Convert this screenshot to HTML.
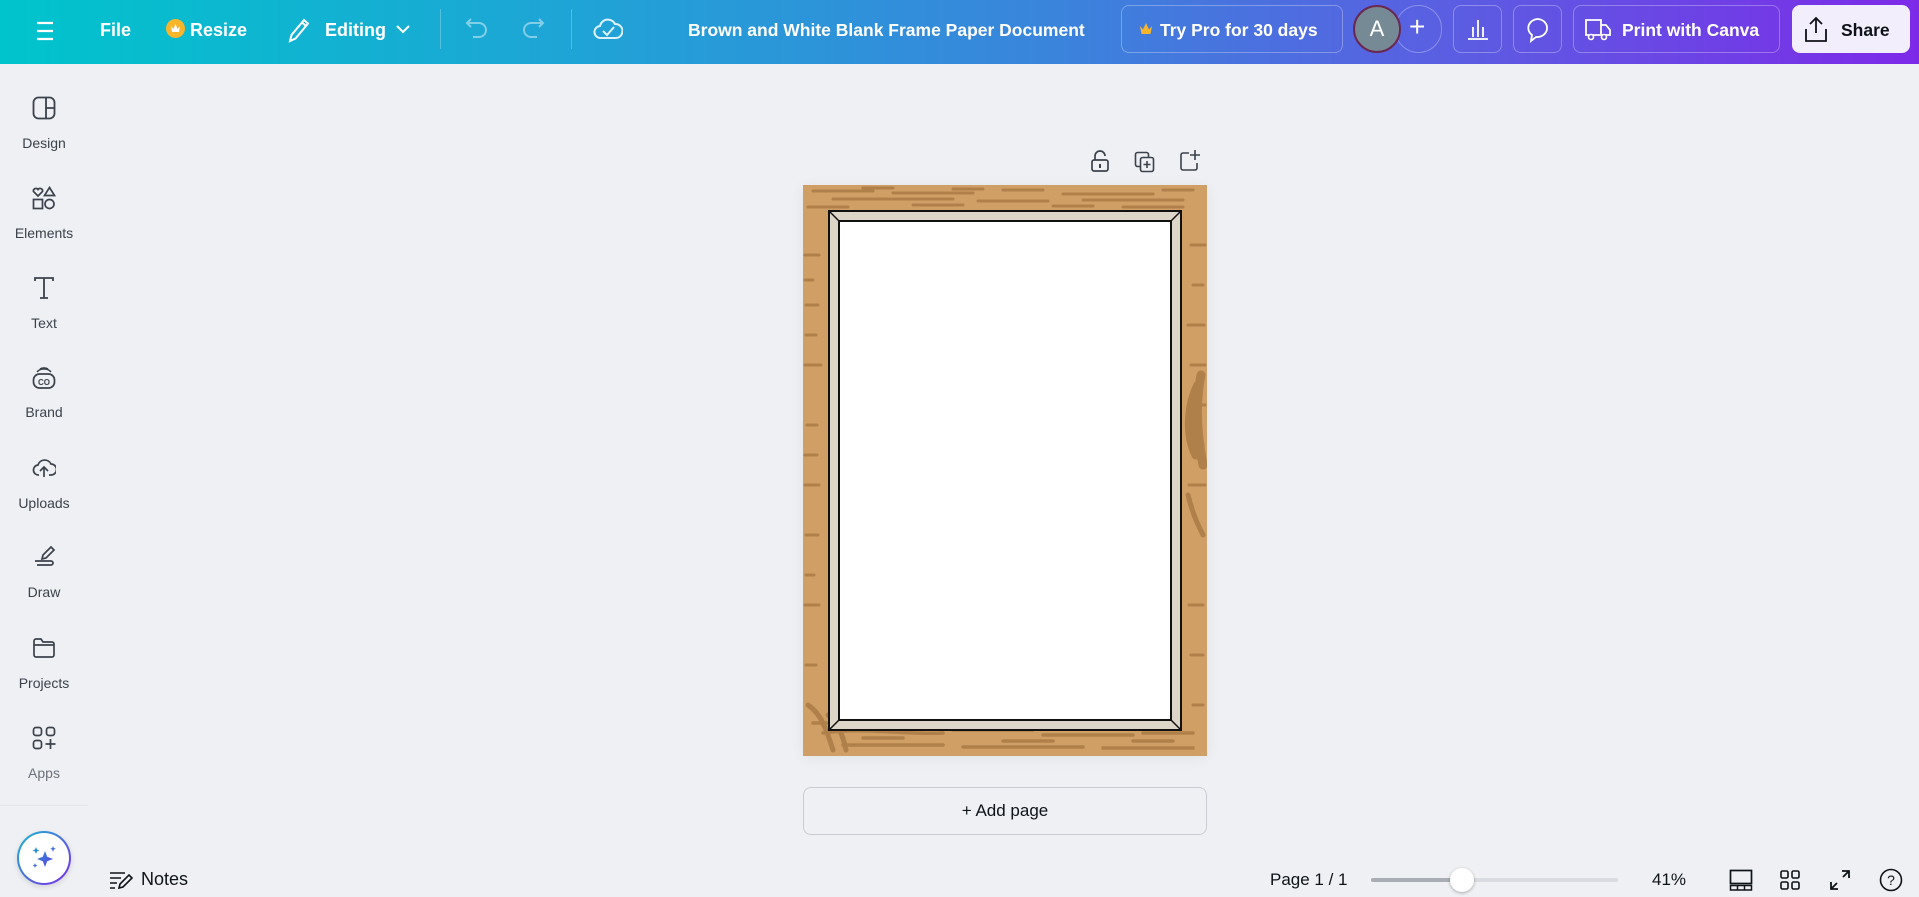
<!DOCTYPE html>
<html><head><meta charset="utf-8">
<style>
*{margin:0;padding:0;box-sizing:border-box}
body{width:1919px;height:897px;overflow:hidden;background:#eef0f4;font-family:"Liberation Sans",sans-serif;position:relative;color:#0e1318}
.top{position:absolute;left:0;top:0;width:1919px;height:64px;background:linear-gradient(90deg,#00c4cc 0%,#1fa4d6 30%,#3a84dc 55%,#5a5fe2 75%,#7d2ae8 100%);color:#fff}
.top .t{position:absolute;top:20px;font-size:18px;font-weight:bold;white-space:nowrap}
.ab{position:absolute}
.btn{position:absolute;border:1px solid rgba(255,255,255,.3);border-radius:8px;height:48px;top:5px}
.side{position:absolute;left:0;width:88px;text-align:center;font-size:14px;color:#3b424c}
.ic{position:absolute;left:32px}
</style></head><body>
<div class="top">
 <svg class="ab" style="left:35px;top:20px" width="20" height="22" viewBox="0 0 20 22"><path d="M2 3h16M2 11h16M2 19h16" stroke="#fff" stroke-width="2.2"/></svg>
 <div class="t" style="left:100px">File</div>
 <div class="ab" style="left:166px;top:19px;width:19px;height:19px;border-radius:50%;background:#f7b52b"></div>
 <svg class="ab" style="left:169px;top:22px" width="13" height="13" viewBox="0 0 13 13"><path d="M2 4l2.5 3L6.5 2l2 5L11 4l-1 6H3z" fill="#fff"/></svg>
 <div class="t" style="left:190px">Resize</div>
 <svg class="ab" style="left:286px;top:16px" width="26" height="28" viewBox="0 0 26 28"><path d="M4 25l1.5-6L18 4l4 3.5L9.5 22.5z M16 6.5l4 3.5" fill="none" stroke="#fff" stroke-width="2"/></svg>
 <div class="t" style="left:325px">Editing</div>
 <svg class="ab" style="left:395px;top:23px" width="16" height="12" viewBox="0 0 16 12"><path d="M2 3l6 6 6-6" fill="none" stroke="#fff" stroke-width="2"/></svg>
 <div class="ab" style="left:440px;top:9px;width:1px;height:40px;background:rgba(255,255,255,.25)"></div>
 <svg class="ab" style="left:465px;top:17px" width="24" height="22" viewBox="0 0 24 22"><path d="M6 2L2 6l4 4M2 6h12a7 7 0 010 14H8" fill="none" stroke="rgba(255,255,255,.45)" stroke-width="2"/></svg>
 <svg class="ab" style="left:521px;top:17px" width="24" height="22" viewBox="0 0 24 22"><path d="M18 2l4 4-4 4M22 6H10a7 7 0 000 14h6" fill="none" stroke="rgba(255,255,255,.45)" stroke-width="2"/></svg>
 <div class="ab" style="left:571px;top:9px;width:1px;height:40px;background:rgba(255,255,255,.25)"></div>
 <svg class="ab" style="left:593px;top:16px" width="30" height="26" viewBox="0 0 30 26"><path d="M8 22a6 6 0 01-1-12 8 8 0 0115-2 6 6 0 011 14z" fill="none" stroke="rgba(255,255,255,.85)" stroke-width="2"/><path d="M10 15l4 4 7-8" fill="none" stroke="rgba(255,255,255,.85)" stroke-width="2"/></svg>
 <div class="t" style="left:688px;font-size:17.5px">Brown and White Blank Frame Paper Document</div>
 <div class="btn" style="left:1121px;width:222px"></div>
 <svg class="ab" style="left:1139px;top:22px" width="14" height="14" viewBox="0 0 14 14"><path d="M1 4l3 3.5L7 1l3 6.5L13 4l-1.5 8h-9z" fill="#f7b52b"/></svg>
 <div class="t" style="left:1160px;font-size:17.5px">Try Pro for 30 days</div>
 <div class="ab" style="left:1395px;top:5px;width:47px;height:48px;border:1px solid rgba(255,255,255,.3);border-radius:24px"></div>
 <div class="ab" style="left:1353px;top:5px;width:48px;height:48px;border-radius:50%;background:#768a95;border:2px solid #6a2750;color:#fff;font-size:22px;text-align:center;line-height:44px">A</div>
 <div class="ab" style="left:1409px;top:11px;font-size:28px;color:#fff">+</div>
 <div class="btn" style="left:1453px;width:49px"></div>
 <svg class="ab" style="left:1466px;top:17px" width="24" height="24" viewBox="0 0 24 24"><path d="M2 22h20M7 20V10M12 20V3M17 20V10" stroke="#fff" stroke-width="1.8"/></svg>
 <div class="btn" style="left:1513px;width:49px"></div>
 <svg class="ab" style="left:1525px;top:16px" width="26" height="28" viewBox="0 0 26 28"><path d="M13 3a10 9 0 00-6 16l-1 6 5-4a10 9 0 102-18z" fill="none" stroke="#fff" stroke-width="1.8"/></svg>
 <div class="btn" style="left:1573px;width:207px"></div>
 <svg class="ab" style="left:1584px;top:16px" width="28" height="26" viewBox="0 0 28 26"><path d="M2 4h15v15H2zM17 9h5l4 5v5h-9z" fill="none" stroke="#fff" stroke-width="1.8"/><circle cx="7" cy="21" r="2.5" fill="#6a4be4" stroke="#fff" stroke-width="1.6"/><circle cx="20" cy="21" r="2.5" fill="#6a4be4" stroke="#fff" stroke-width="1.6"/></svg>
 <div class="t" style="left:1622px;font-size:17.5px">Print with Canva</div>
 <div class="ab" style="left:1792px;top:5px;width:118px;height:48px;border-radius:8px;background:#f3eefc"></div>
 <svg class="ab" style="left:1804px;top:15px" width="24" height="28" viewBox="0 0 24 28"><path d="M12 18V3M6 9l6-6 6 6M2 14v12h20V14" fill="none" stroke="#0e1318" stroke-width="1.8"/></svg>
 <div class="t" style="left:1841px;color:#0e1318;font-size:17.5px">Share</div>
</div>

<!-- sidebar -->
<svg class="ic" style="top:96px" width="24" height="24" viewBox="0 0 24 24"><rect x="1.5" y="1.5" width="21" height="21" rx="5" fill="none" stroke="#3b424c" stroke-width="1.8"/><path d="M14 1.5v21M14 12h8.5" stroke="#3b424c" stroke-width="1.8"/></svg>
<div class="side" style="top:135px">Design</div>
<svg class="ic" style="top:186px" width="24" height="24" viewBox="0 0 24 24"><path d="M6 10L1.5 5.5a2.5 2.5 0 014.5-2 2.5 2.5 0 014.5 2z M17.5 1.5l5 8h-10z" fill="none" stroke="#3b424c" stroke-width="1.7"/><rect x="1.5" y="13.5" width="9" height="9" fill="none" stroke="#3b424c" stroke-width="1.7"/><circle cx="17.5" cy="18" r="4.5" fill="none" stroke="#3b424c" stroke-width="1.7"/></svg>
<div class="side" style="top:225px">Elements</div>
<svg class="ic" style="top:276px" width="24" height="24" viewBox="0 0 24 24"><path d="M3 5V2h18v3M12 2v20M8 22h8" fill="none" stroke="#3b424c" stroke-width="1.8"/></svg>
<div class="side" style="top:315px">Text</div>
<svg class="ic" style="top:366px" width="24" height="24" viewBox="0 0 24 24"><rect x="1.5" y="8" width="21" height="14" rx="6" fill="none" stroke="#3b424c" stroke-width="1.7"/><path d="M5 6c3-4 11-4 14 0M8 3c2-1.5 6-1.5 8 0" fill="none" stroke="#3b424c" stroke-width="1.5"/><text x="12" y="19" font-size="8" font-weight="bold" text-anchor="middle" fill="#3b424c" font-family="Liberation Sans">CO</text></svg>
<div class="side" style="top:404px">Brand</div>
<svg class="ic" style="top:456px" width="24" height="24" viewBox="0 0 24 24"><path d="M7 19a5 5 0 01-1-10 7 7 0 0113-1 5 5 0 010 11h-2" fill="none" stroke="#3b424c" stroke-width="1.7"/><path d="M12 21v-9M8 15l4-4 4 4" fill="none" stroke="#3b424c" stroke-width="1.7"/></svg>
<div class="side" style="top:495px">Uploads</div>
<svg class="ic" style="top:545px" width="24" height="24" viewBox="0 0 24 24"><path d="M10 14l1-4 8-8 3 3-8 8zM3 16h16a2 2 0 010 4H5" fill="none" stroke="#3b424c" stroke-width="1.7"/></svg>
<div class="side" style="top:584px">Draw</div>
<svg class="ic" style="top:636px" width="24" height="24" viewBox="0 0 24 24"><path d="M2 5a2 2 0 012-2h5l2 3h9a2 2 0 012 2v11a2 2 0 01-2 2H4a2 2 0 01-2-2zM2 9h20" fill="none" stroke="#3b424c" stroke-width="1.7"/></svg>
<div class="side" style="top:675px">Projects</div>
<svg class="ic" style="top:726px" width="24" height="24" viewBox="0 0 24 24"><rect x="1.5" y="1.5" width="8" height="8" rx="2.5" fill="none" stroke="#3b424c" stroke-width="1.7"/><rect x="14.5" y="1.5" width="8" height="8" rx="2.5" fill="none" stroke="#3b424c" stroke-width="1.7"/><rect x="1.5" y="14.5" width="8" height="8" rx="2.5" fill="none" stroke="#3b424c" stroke-width="1.7"/><path d="M18.5 13v10M13.5 18h10" stroke="#3b424c" stroke-width="1.7"/></svg>
<div class="side" style="top:765px;color:#6b717a">Apps</div>
<div class="ab" style="left:0;top:805px;width:88px;height:1px;background:#e4e6ea"></div>
<div class="ab" style="left:17px;top:831px;width:54px;height:54px;border-radius:50%;background:linear-gradient(135deg,#18b8d0,#7d2ae8);box-shadow:0 2px 6px rgba(0,0,0,.12)"></div>
<div class="ab" style="left:19px;top:833px;width:50px;height:50px;border-radius:50%;background:#fff"></div>
<svg class="ab" style="left:31px;top:845px" width="26" height="26" viewBox="0 0 26 26"><defs><linearGradient id="g" x1="0" y1="0" x2="1" y2="1"><stop offset="0" stop-color="#1aa0d0"/><stop offset="1" stop-color="#6a3be6"/></linearGradient></defs><path d="M14 6l2.2 5.8L22 14l-5.8 2.2L14 22l-2.2-5.8L6 14l5.8-2.2z M5 2l1 2.5L8.5 5.5 6 6.5 5 9 4 6.5 1.5 5.5 4 4.5z M22 1l.8 2 2 .8-2 .8L22 7l-.8-2.4-2-.8 2-.8z M4 18l.7 1.8 1.8.7-1.8.7L4 23l-.7-1.8-1.8-.7 1.8-.7z" fill="url(#g)"/></svg>
<svg class="ab" style="left:109px;top:870px" width="24" height="20" viewBox="0 0 24 20"><path d="M1 3h15M1 8h11M1 13h7M1 18h5" stroke="#0e1318" stroke-width="1.6"/><path d="M10 18l1-4 9-9 3 3-9 9z" fill="none" stroke="#0e1318" stroke-width="1.6"/></svg>
<div class="ab" style="left:141px;top:869px;font-size:18px;color:#0e1318">Notes</div>

<!-- page actions -->
<svg class="ab" style="left:1090px;top:150px" width="20" height="22" viewBox="0 0 20 22"><path d="M5 10V6a5 5 0 0110 0" fill="none" stroke="#3b424c" stroke-width="1.7"/><rect x="2" y="10" width="16" height="11" rx="2" fill="none" stroke="#3b424c" stroke-width="1.7"/><path d="M10 14v4" stroke="#3b424c" stroke-width="2"/></svg>
<svg class="ab" style="left:1134px;top:151px" width="22" height="22" viewBox="0 0 22 22"><rect x="1.5" y="1.5" width="13" height="14" rx="2" fill="none" stroke="#3b424c" stroke-width="1.6"/><rect x="6.5" y="6.5" width="13" height="14" rx="2" fill="#eef0f4" stroke="#3b424c" stroke-width="1.6"/><path d="M13 10v7M9.5 13.5h7" stroke="#3b424c" stroke-width="1.6"/></svg>
<svg class="ab" style="left:1179px;top:149px" width="22" height="22" viewBox="0 0 22 22"><path d="M10 4H4a2 2 0 00-2 2v13a2 2 0 002 2h12a2 2 0 002-2v-5M16 1v10M11 6h10" fill="none" stroke="#3b424c" stroke-width="1.6"/></svg>

<!-- page -->
<div class="ab" style="left:803px;top:185px;width:404px;height:571px;box-shadow:0 2px 14px rgba(0,0,0,.06)">
<svg width="404" height="571" viewBox="0 0 404 571" style="display:block">
<rect width="404" height="571" fill="#cf9f66"/>
<g stroke="#b0804a" stroke-linecap="round" fill="none">
<path d="M10 6h60M90 8h80M200 5h40M260 9h90M30 14h120M175 16h70M280 15h100M5 22h40M320 22h60M60 3h30M150 4h30M360 5h30M110 20h50M250 21h40" stroke-width="3"/>
<path d="M2 70h14M3 120h12M2 180h16M4 240h10M2 300h14M3 350h12M2 420h14M3 480h10M388 60h14M385 140h16M390 220h12M386 300h16M388 470h12M390 520h10M2 95h8M3 150h10M2 270h12M3 390h8M390 100h10M388 180h14M392 260h8M386 420h14" stroke-width="3"/>
<path d="M20 548c40-6 80 2 120 0M150 545h80M240 550h90M340 548h50M40 560h100M160 562h120M300 563h90M10 538h30M60 553h40M200 556h50M330 556h40" stroke-width="3.5"/>
<path d="M5 520c15 10 20 30 25 45M25 530c10 8 15 20 18 35" stroke-width="5"/>
<path d="M395 200c-10 20-12 50-2 70M398 190c-6 30-4 60 2 90" stroke-width="9"/>
<path d="M385 310c5 20 10 30 15 40" stroke-width="5"/>
</g>
<!-- frame -->
<rect x="26" y="26" width="352" height="519" fill="#ddd5c7" stroke="#111" stroke-width="2"/>
<rect x="36" y="36" width="332" height="499" fill="#fff" stroke="#111" stroke-width="2"/>
<path d="M26 26l10 10M378 26l-10 10M26 545l10-10M378 545l-10-10" stroke="#111" stroke-width="1.5"/>
</svg></div>

<div class="ab" style="left:803px;top:787px;width:404px;height:48px;border:1px solid #c9ccd3;border-radius:8px;text-align:center;line-height:46px;font-size:17px;color:#0e1318">+ Add page</div>

<!-- bottom bar -->
<div class="ab" style="left:1270px;top:870px;font-size:17px">Page 1 / 1</div>
<div class="ab" style="left:1371px;top:878px;width:247px;height:4px;border-radius:2px;background:#d8dbe0"></div>
<div class="ab" style="left:1371px;top:878px;width:91px;height:4px;border-radius:2px;background:#a9aeb6"></div>
<div class="ab" style="left:1450px;top:868px;width:24px;height:24px;border-radius:50%;background:#fff;box-shadow:0 1px 3px rgba(0,0,0,.3)"></div>
<div class="ab" style="left:1652px;top:870px;font-size:17px">41%</div>
<svg class="ab" style="left:1729px;top:869px" width="24" height="22" viewBox="0 0 24 22"><rect x="1.5" y="1.5" width="21" height="13" fill="none" stroke="#0e1318" stroke-width="1.7"/><rect x="1.5" y="16.5" width="21" height="4.5" fill="none" stroke="#0e1318" stroke-width="1.5"/><path d="M8.5 16.5v4.5M15.5 16.5v4.5" stroke="#0e1318" stroke-width="1.5"/></svg>
<svg class="ab" style="left:1780px;top:870px" width="20" height="20" viewBox="0 0 20 20"><g fill="none" stroke="#0e1318" stroke-width="1.6"><rect x="1" y="1" width="7" height="7" rx="1.5"/><rect x="12" y="1" width="7" height="7" rx="1.5"/><rect x="1" y="12" width="7" height="7" rx="1.5"/><rect x="12" y="12" width="7" height="7" rx="1.5"/></g></svg>
<svg class="ab" style="left:1829px;top:869px" width="22" height="22" viewBox="0 0 22 22"><path d="M13 2h7v7M20 2l-6 6M9 20H2v-7M2 20l6-6" fill="none" stroke="#0e1318" stroke-width="1.8"/></svg>
<svg class="ab" style="left:1879px;top:868px" width="24" height="24" viewBox="0 0 24 24"><circle cx="12" cy="12" r="10.5" fill="none" stroke="#0e1318" stroke-width="1.6"/><text x="12" y="17" font-size="14" text-anchor="middle" fill="#0e1318" font-family="Liberation Sans">?</text></svg>
</body></html>
